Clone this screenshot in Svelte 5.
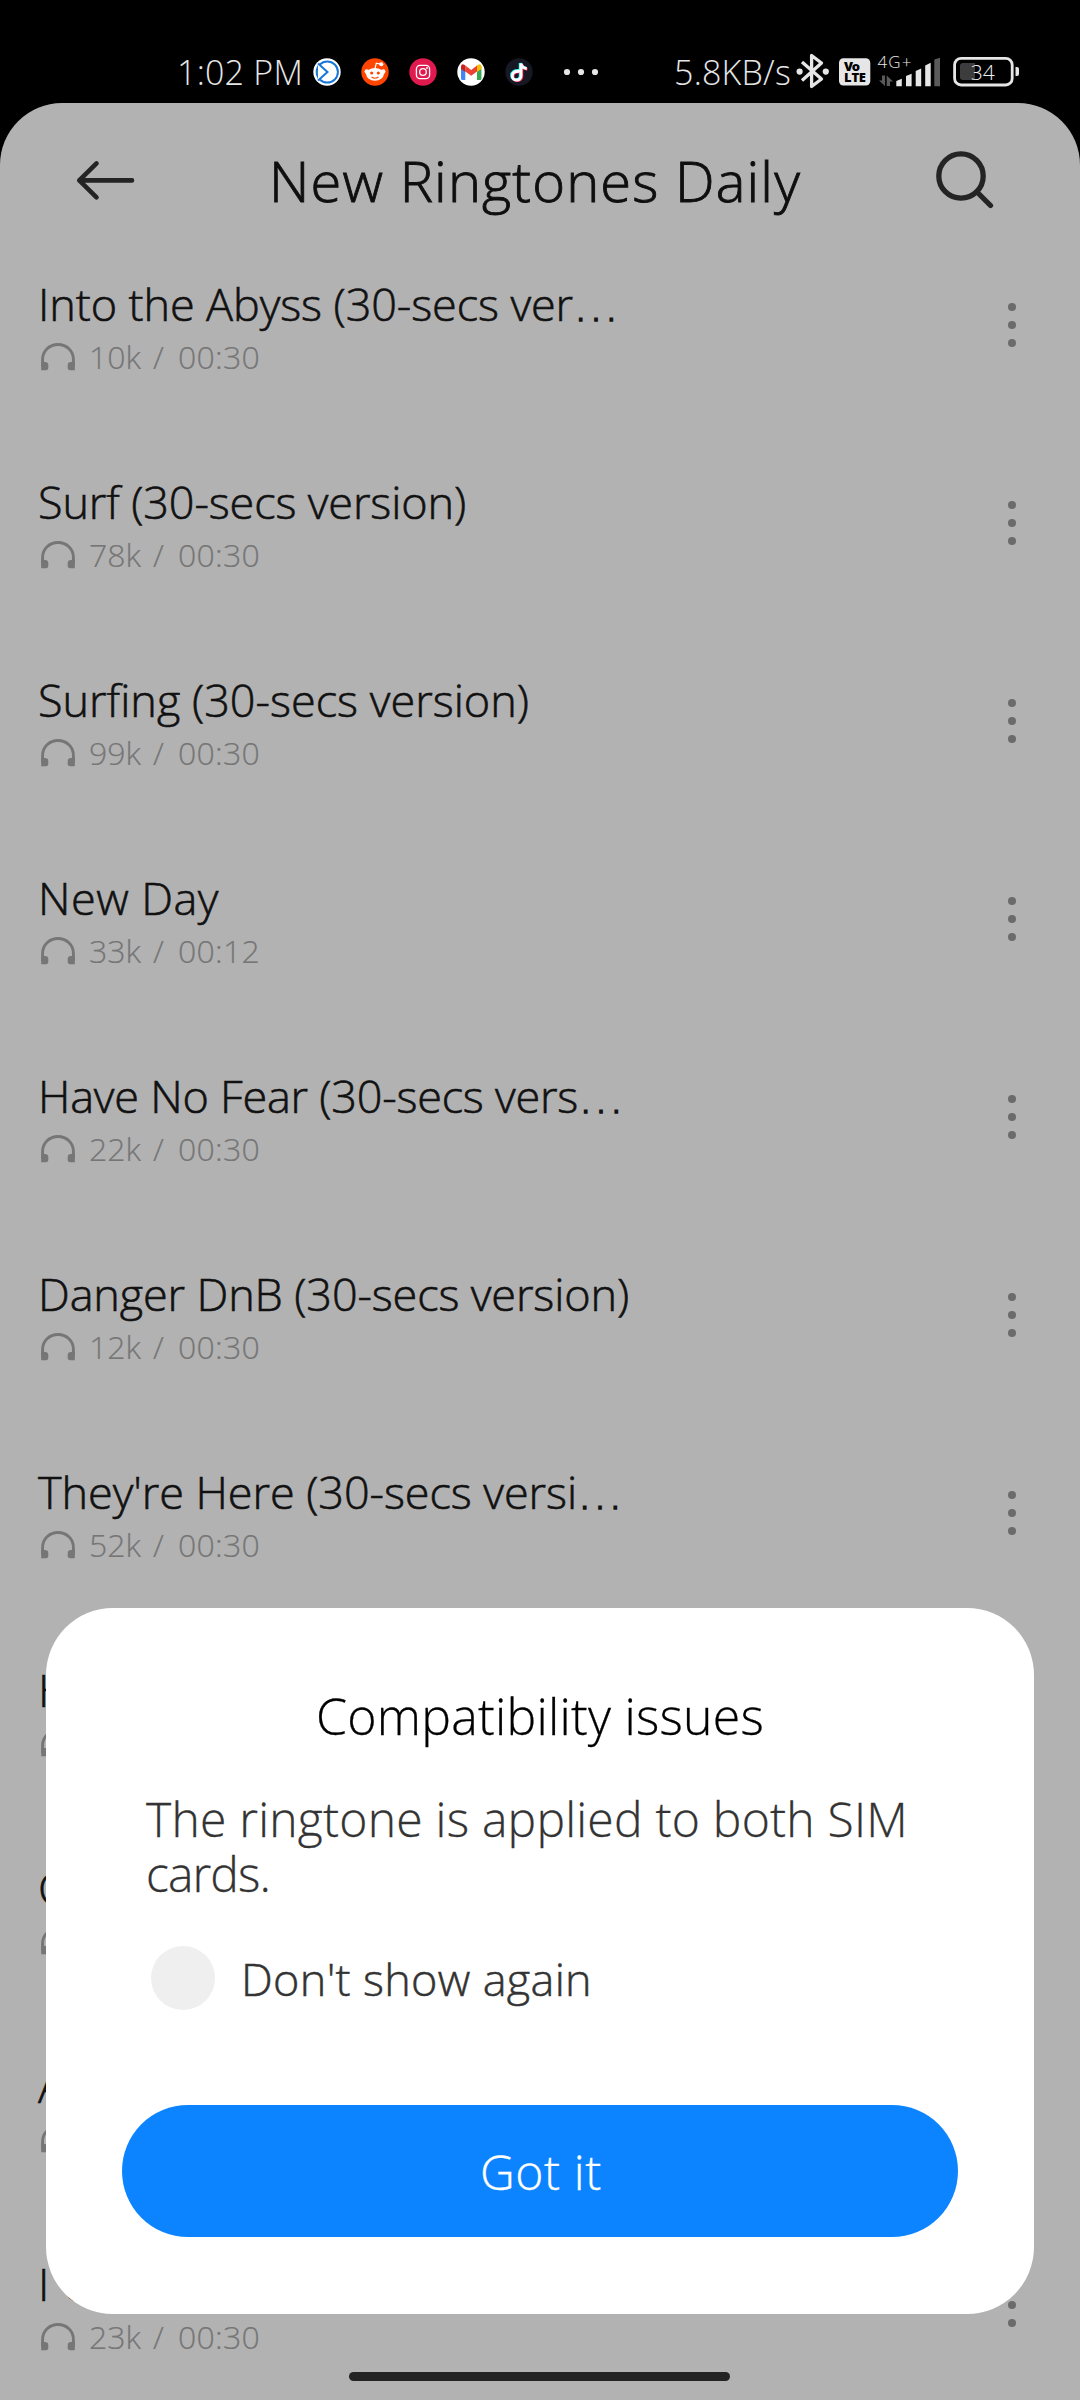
<script>
  const songs = [
    { title: 'Into the Abyss (30-secs ver', cut: true, width: 535, plays: '10k', time: '00:30' },
    { title: 'Surf (30-secs version)', width: 428, plays: '78k', time: '00:30' },
    { title: 'Surfing (30-secs version)', width: 491, plays: '99k', time: '00:30' },
    { title: 'New Day', width: 181, plays: '33k', time: '00:12' },
    { title: 'Have No Fear (30-secs vers', cut: true, width: 540, plays: '22k', time: '00:30' },
    { title: 'Danger DnB (30-secs version)', width: 591, plays: '12k', time: '00:30' },
    { title: "They're Here (30-secs versi", cut: true, width: 539, plays: '52k', time: '00:30' },
    { title: 'H', width: 34, plays: '2', time: '00:30' },
    { title: 'C', width: 30, plays: '2', time: '00:30' },
    { title: 'A', width: 30, plays: '2', time: '00:30' },
    { title: 'I c', width: 49, plays: '23k', time: '00:30' }
  ];

  // Tracks a line of text so that it spans the given width.
  function fit(node, width) {
    const natural = node.getBoundingClientRect().width;
    node.style.letterSpacing = `${(width - natural) / node.textContent.length}px`;
  }
</script>

<div class="screen">
  <div class="status">
    <span class="clock"><span class="run" use:fit={126}>1:02 PM</span></span>
    <svg class="apps" width="300" height="40" viewBox="310 52 300 40">
      <circle cx="327" cy="72" r="13.7" fill="#fff" />
      <circle cx="327.3" cy="72" r="10.6" fill="none" stroke="#1976d8" stroke-width="2" />
      <path d="M318 63.5L327.5 72L318 80.5" fill="#fff" stroke="#1976d8" stroke-width="2" />
      <circle cx="375" cy="72" r="13.7" fill="#ff4500" />
      <ellipse cx="375" cy="74.3" rx="8.8" ry="6.4" fill="#fff" />
      <circle cx="366.8" cy="71.6" r="2.3" fill="#fff" />
      <circle cx="383.2" cy="71.6" r="2.3" fill="#fff" />
      <circle cx="381.3" cy="64.3" r="2" fill="#fff" />
      <path d="M375 68.5L376.3 63.2L380.5 64.2" fill="none" stroke="#fff" stroke-width="1.2" />
      <circle cx="371.7" cy="73" r="1.6" fill="#ff4500" />
      <circle cx="378.3" cy="73" r="1.6" fill="#ff4500" />
      <path d="M371.5 77Q375 79.4 378.5 77" fill="none" stroke="#ff4500" stroke-width="1.1" />
      <circle cx="423" cy="72" r="13.7" fill="#e0194f" />
      <rect x="416.4" y="65.4" width="13.2" height="13.2" rx="3.6" fill="none" stroke="#fff" stroke-width="1.3" />
      <circle cx="423" cy="72" r="3.3" fill="none" stroke="#fff" stroke-width="1.3" />
      <circle cx="427" cy="68" r=".9" fill="#fff" />
      <circle cx="471" cy="72" r="13.7" fill="#fff" />
      <path d="M461 66.5L465.3 69.5V80H462.5Q461 80 461 78.5Z" fill="#4285f4" />
      <path d="M481.4 66.5L477 69.5V80H480Q481.4 80 481.4 78.5Z" fill="#34a853" />
      <path d="M465.3 65.6L471.2 70L477 65.6V71.4L471.2 75.8L465.3 71.4Z" fill="#ea4335" />
      <path d="M461 69V66.4Q461.4 63.3 464.2 64.7L465.3 65.6V72Z" fill="#c5221f" />
      <path d="M481.4 69V66.4Q481 63.3 478.2 64.7L477 65.6V72Z" fill="#fbbc04" />
      <circle cx="519" cy="72" r="13.7" fill="#161823" />
      <g fill="none" stroke-width="2.9">
        <path d="M518.8 70.5Q511.6 70.3 511.6 75.4C511.6 81 520.2 81 520.2 75.4V63Q521 67.4 526 68" stroke="#25f4ee" />
        <path d="M520.2 71.8Q513 71.6 513 76.7C513 82 521.8 82 521.8 76.6V64.3Q522.6 68.8 527.4 69.3" stroke="#fe2c55" />
        <path d="M519.5 71.2Q512.3 71 512.3 76C512.3 81.4 521 81.4 521 76V63.5Q521.8 68 526.8 68.6" stroke="#fff" />
      </g>
      <g fill="#e6e6e6"><circle cx="567" cy="72" r="3.1" /><circle cx="581" cy="72" r="3.1" /><circle cx="595" cy="72" r="3.1" /></g>
    </svg>
    <span class="speed"><span class="run" use:fit={117}>5.8KB/s</span></span>
    <svg class="system" width="240" height="44" viewBox="790 50 240 44">
      <path d="M802 62L821.5 79L811.6 86.5V55.5L821.5 63L802 80.5" fill="none" stroke="#e6e6e6" stroke-width="3.3" stroke-linejoin="round" />
      <circle cx="799.6" cy="71.6" r="3.1" fill="#e6e6e6" />
      <circle cx="825.8" cy="71.6" r="3.1" fill="#e6e6e6" />
      <rect x="839" y="58.3" width="31.3" height="27.3" rx="4.5" fill="#e6e6e6" />
      <text class="badge" x="844" y="70.5" textLength="16">Vo</text>
      <text class="badge" x="844" y="82.2" textLength="22">LTE</text>
      <text class="net" x="877.5" y="67.8" textLength="34">4G+</text>
      <g fill="#5a5a5a">
        <path d="M879 80.5H882V75.5H885V86L879 80.5Z" />
        <path d="M886.7 75.5L893 81.5H890V86H886.7Z" />
        <path d="M934.3 59.5L940 57.7V86.3H934.3Z" />
      </g>
      <g fill="#e6e6e6">
        <path d="M896.3 81L901.8 78.8V86.3H896.3Z" />
        <path d="M906 76L911.6 73.7V86.3H906Z" />
        <path d="M915.7 71L921.2 68.5V86.3H915.7Z" />
        <path d="M925.2 65.5L930.7 62.7V86.3H925.2Z" />
        <path d="M1015.5 67H1017Q1019 67 1019 69V74Q1019 76 1017 76H1015.5Z" />
      </g>
      <rect x="954.6" y="58.4" width="57.6" height="26.6" rx="6.5" fill="none" stroke="#e6e6e6" stroke-width="2.8" />
      <path d="M963 63H975V80H963Q960 80 960 77V66Q960 63 963 63Z" fill="#3c3c3c" />
      <text class="charge" x="970.8" y="79.8" textLength="24">34</text>
    </svg>
  </div>

  <div class="sheet">
    <header>
      <svg class="back" width="60" height="44" viewBox="0 0 60 44" fill="none" stroke="#242424" stroke-width="4.6" stroke-linecap="round" stroke-linejoin="round">
        <path d="M57 22.4H4.3M21.5 5.4L4.3 22.4L21.5 39.4" />
      </svg>
      <h1><span class="run" use:fit={532}>New Ringtones Daily</span></h1>
      <svg class="search" width="60" height="60" viewBox="0 0 60 60" fill="none" stroke="#242424" stroke-width="5.3" stroke-linecap="round">
        <circle cx="26" cy="26" r="22.2" />
        <path d="M43 43L55.5 55.5" />
      </svg>
    </header>

    <div class="list">
      {#each songs as song}
        <div class="row">
          <div class="info">
            <div class="title"><span class="run" use:fit={song.width}>{song.title}</span>{#if song.cut}<span class="dots">…</span>{/if}</div>
            <div class="meta">
              <svg width="34" height="28" viewBox="0 0 34 28" fill="#767676">
                <path d="M1.6 24V16.4C1.6 7.8 8.4 1.5 17 1.5S32.4 7.8 32.4 16.4V24" fill="none" stroke="#767676" stroke-width="2.9" />
                <path d="M.2 19H4Q7.3 19 7.3 22V24.5Q7.3 27.2 5 27.2H.2Z" />
                <path d="M33.8 19H30Q26.7 19 26.7 22V24.5Q26.7 27.2 29 27.2H33.8Z" />
              </svg>
              <span class="plays"><span class="run" use:fit={52}>{song.plays}</span></span>
              <span class="slash">/</span>
              <span class="run" use:fit={82}>{song.time}</span>
            </div>
          </div>
          <div class="more"><i></i><i></i><i></i></div>
        </div>
      {/each}
    </div>
  </div>

  <div class="dialog">
    <h2><span class="run" use:fit={448}>Compatibility issues</span></h2>
    <p>
      <span class="run" use:fit={762}>The ringtone is applied to both SIM</span><br />
      <span class="run" use:fit={124}>cards.</span>
    </p>
    <div class="option">
      <span class="check"></span>
      <span class="run" use:fit={351}>Don't show again</span>
    </div>
    <button><span class="run" use:fit={122}>Got it</span></button>
  </div>

  <div class="home"></div>
</div>

<style>
  :global(body) {
    background: #000;
  }
  .screen {
    position: relative;
    display: flex;
    flex-direction: column;
    width: 1080px;
    height: 2400px;
    overflow: hidden;
    background: #000;
    font-family: 'Open Sans', 'Noto Sans', sans-serif;
    font-weight: 300;
  }
  .run {
    display: inline-block;
    white-space: pre;
  }
  .status {
    display: flex;
    flex: none;
    height: 103px;
    padding-left: 177px;
    color: #e6e6e6;
    font-size: 34px;
    line-height: 40px;
  }
  .clock {
    width: 133px;
    padding-top: 52px;
  }
  .apps {
    flex: none;
    margin-top: 52px;
  }
  .speed {
    width: 116px;
    margin-left: 64px;
    padding-top: 52px;
  }
  .system {
    flex: none;
    margin-top: 50px;
  }
  .badge {
    fill: #000;
    font-size: 13px;
    font-weight: 800;
  }
  .net {
    fill: #e6e6e6;
    font-size: 17px;
  }
  .charge {
    fill: #f0f0f0;
    font-size: 21px;
  }
  .sheet {
    flex: 1;
    min-height: 0;
    overflow: hidden;
    border-radius: 62px 62px 0 0;
    background: #b2b2b2;
  }
  header {
    display: flex;
    box-sizing: border-box;
    height: 167px;
    padding: 42px 85px 0 75px;
    justify-content: space-between;
  }
  .back {
    margin-top: 13px;
  }
  .search {
    margin-top: 5px;
  }
  h1 {
    margin: 0;
    color: #0f0f0f;
    font-size: 56px;
    font-weight: 300;
    line-height: 70px;
    -webkit-text-stroke: 0.9px #0f0f0f;
  }
  .row {
    display: flex;
    box-sizing: border-box;
    height: 198px;
    padding: 9px 64px 0 38px;
    justify-content: space-between;
  }
  .title {
    height: 50px;
    color: #111;
    font-size: 45px;
    line-height: 50px;
    white-space: nowrap;
    -webkit-text-stroke: 0.6px #111;
  }
  .dots {
    font-family: 'DejaVu Sans', sans-serif;
    font-size: 46px;
    font-weight: 200;
    line-height: 1;
    -webkit-text-stroke: 1.4px #111;
  }
  .meta {
    display: flex;
    margin-top: 8px;
    padding-left: 3px;
    color: #767676;
    font-size: 32px;
    line-height: 40px;
    -webkit-text-stroke: 0.2px #767676;
  }
  .meta svg {
    margin: 6px 14px 0 0;
  }
  .plays {
    width: 64px;
  }
  .slash {
    width: 25px;
  }
  .more {
    display: flex;
    flex-direction: column;
    gap: 10px;
    padding-top: 24px;
  }
  .more i {
    width: 8px;
    height: 8px;
    border-radius: 50%;
    background: #6b6b6b;
  }
  .dialog {
    position: absolute;
    top: 1608px;
    left: 46px;
    display: flex;
    flex-direction: column;
    box-sizing: border-box;
    width: 988px;
    height: 706px;
    padding: 78px 76px 77px;
    border-radius: 67px;
    background: #fff;
  }
  h2 {
    margin: 0;
    color: #000;
    font-size: 50px;
    font-weight: 300;
    line-height: 60px;
    text-align: center;
    -webkit-text-stroke: 0.3px #000;
  }
  p {
    margin: 45px 0 0 24px;
    color: #333;
    font-size: 48px;
    line-height: 55px;
    white-space: nowrap;
    -webkit-text-stroke: 0.3px #333;
  }
  .option {
    display: flex;
    align-items: center;
    height: 64px;
    margin: 45px 0 0 29px;
    color: #333;
    font-size: 45px;
    -webkit-text-stroke: 0.5px #333;
  }
  .check {
    width: 64px;
    height: 64px;
    margin-right: 26px;
    border-radius: 50%;
    background: #efefef;
  }
  button {
    height: 132px;
    margin-top: 95px;
    padding: 0 0 0 2px;
    border: 0;
    border-radius: 66px;
    background: #0d84ff;
    color: #fff;
    font: inherit;
    font-size: 48px;
    -webkit-text-stroke: 0.3px #fff;
  }
  .home {
    position: absolute;
    bottom: 19px;
    left: 349px;
    width: 381px;
    height: 9px;
    border-radius: 5px;
    background: #232323;
  }
</style>
